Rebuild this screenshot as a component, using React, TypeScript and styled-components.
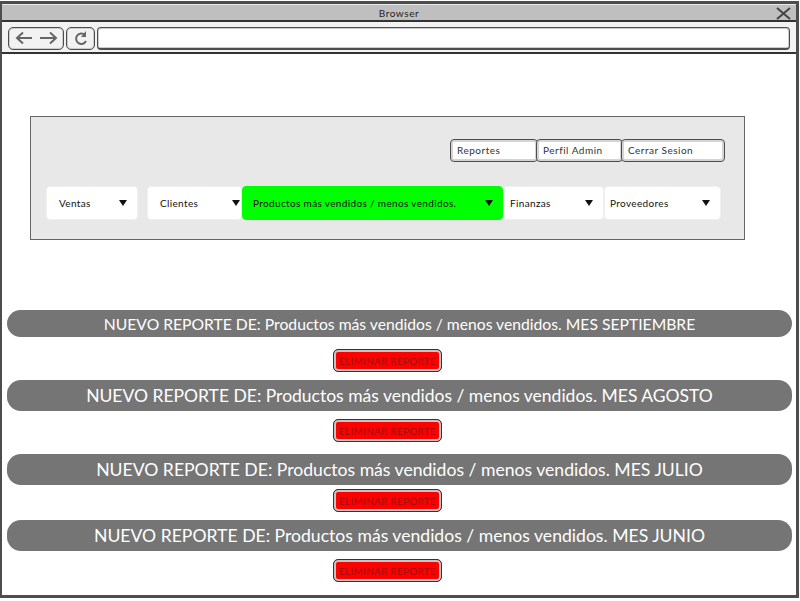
import { createGlobalStyle, styled } from 'styled-components';

const GlobalStyle = createGlobalStyle`
  html, body {
    margin: 0;
    padding: 0;
    background: #fff;
  }
  * {
    box-sizing: border-box;
  }
  body {
    font-family: 'Comic Sans MS', 'Lato', 'Noto Sans', sans-serif;
  }
`;

const Frame = styled.div`
  width: 799px;
  height: 597px;
  margin-top: 1px;
  border: 2px solid #4d4d4d;
  border-width: 3px 3px 3px 2px;
  display: flex;
  flex-direction: column;
`;

const TitleBar = styled.header`
  height: 18px;
  background: #bfbfbf;
  border-top: 1px solid #e8e8e8;
  border-bottom: 2px solid #333;
  display: flex;
  align-items: center;
  justify-content: center;
  position: relative;
  font-size: 10px;
  letter-spacing: 0.6px;
  color: #222;
`;

const CloseIcon = styled.svg`
  position: absolute;
  right: 5px;
  top: 2px;
  width: 15px;
  height: 13px;
`;

const Toolbar = styled.nav`
  height: 32px;
  background: #f2f2f2;
  border-bottom: 2px solid #333;
  display: flex;
  align-items: center;
  gap: 2px;
  padding: 2px 6px 0 6px;
`;

const ToolButton = styled.div<{ $w: number }>`
  width: ${(p) => p.$w}px;
  height: 23px;
  border: 1px solid #4d4d4d;
  border-radius: 5px;
  background: #f2f2f2;
  box-shadow: inset 0 0 0 1px #ccc;
  display: flex;
  align-items: center;
  justify-content: center;
`;

const AddressBar = styled.div`
  flex: 1;
  height: 23px;
  border: 1px solid #4d4d4d;
  border-bottom-width: 2px;
  border-radius: 4px;
  background: #fff;
  box-shadow: inset 0 0 0 1px #ccc;
`;

const Content = styled.main`
  flex: 1;
  display: flex;
  flex-direction: column;
  padding-top: 62px;
`;

const Panel = styled.section`
  width: 715px;
  height: 124px;
  margin-left: 28px;
  background: #e8e8e8;
  border: 1px solid #666;
  display: flex;
  flex-direction: column;
`;

const Tabs = styled.div`
  display: flex;
  margin: 22px 0 0 419px;
`;

const Tab = styled.div<{ $w: number }>`
  width: ${(p) => p.$w}px;
  height: 23px;
  margin-right: -2px;
  padding: 0 0 2px 6px;
  background: #fff;
  border: 1px solid #4d4d4d;
  border-radius: 4px;
  box-shadow: inset 0 0 0 2px #d4d4d4;
  display: flex;
  align-items: center;
  font-size: 10px;
  letter-spacing: 0.5px;
  color: #333;
`;

const Menu = styled.div`
  display: flex;
  margin: 24px 0 0 15px;
`;

const Dropdown = styled.div<{ $w: number; $active?: boolean; $gap?: number; $pad?: number; $end?: number }>`
  width: ${(p) => p.$w}px;
  height: 34px;
  margin-right: ${(p) => p.$gap ?? 0}px;
  padding: 0 ${(p) => p.$end ?? 10}px 0 ${(p) => p.$pad ?? 12}px;
  background: ${(p) => (p.$active ? '#00ff00' : '#fff')};
  border-radius: 4px;
  border: 1px solid ${(p) => (p.$active ? '#00ff00' : '#f0f0f0')};
  display: flex;
  align-items: center;
  justify-content: space-between;
  font-size: 10px;
  letter-spacing: 0.35px;
  color: #111;
`;

const Caret = styled.span`
  width: 0;
  height: 0;
  border-left: 4.5px solid transparent;
  border-right: 4.5px solid transparent;
  border-top: 6px solid #111;
`;

const Reports = styled.div`
  display: flex;
  flex-direction: column;
  margin-top: 70px;
`;

const ReportBar = styled.div<{ $h: number; $size: number; $top: number }>`
  height: ${(p) => p.$h}px;
  width: 785px;
  margin: ${(p) => p.$top}px 0 0 5px;
  background: #757575;
  border-radius: 14px;
  display: flex;
  align-items: center;
  justify-content: center;
  font-size: ${(p) => p.$size}px;
  color: #fff;
  white-space: nowrap;
`;

const DeleteButton = styled.div<{ $top: number }>`
  width: 109px;
  height: 23px;
  margin: ${(p) => p.$top}px 0 0 331px;
  background: #ff0000;
  border: 1px solid #333;
  border-radius: 5px;
  box-shadow: inset 0 0 0 2px #c4c4c4;
  display: flex;
  align-items: center;
  justify-content: center;
  font-size: 10px;
  letter-spacing: 0.25px;
  color: #a01010;
`;

const reports = [
  { mes: 'SEPTIEMBRE', h: 27, size: 15.7, top: 0, gap: 12 },
  { mes: 'AGOSTO', h: 31, size: 17.5, top: 8, gap: 8 },
  { mes: 'JULIO', h: 31, size: 17.6, top: 12, gap: 4 },
  { mes: 'JUNIO', h: 31, size: 17.6, top: 8, gap: 8 },
];

function App() {
  return (
    <>
      <GlobalStyle />
      <Frame>
        <TitleBar>
          Browser
          <CloseIcon viewBox="0 0 15 13">
            <path d="M1 1 L14 12 M14 1 L1 12" stroke="#444" strokeWidth="2" fill="none" />
          </CloseIcon>
        </TitleBar>
        <Toolbar>
          <ToolButton $w={56}>
            <svg width="46" height="14" viewBox="0 0 46 14">
              <path
                d="M4 7 H19 M10 1.5 L4 7 L10 12.5 M27 7 H43 M37 1.5 L43 7 L37 12.5"
                stroke="#666"
                strokeWidth="2"
                fill="none"
              />
            </svg>
          </ToolButton>
          <ToolButton $w={29}>
            <svg width="14" height="15" viewBox="0 0 14 15">
              <path d="M11 4 A5.2 5.2 0 1 0 12 10" stroke="#666" strokeWidth="2" fill="none" />
              <path d="M12 0 V6 H7 Z" fill="#666" />
            </svg>
          </ToolButton>
          <AddressBar />
        </Toolbar>
        <Content>
          <Panel>
            <Tabs>
              <Tab $w={88}>Reportes</Tab>
              <Tab $w={87}>Perfil Admin</Tab>
              <Tab $w={104}>Cerrar Sesion</Tab>
            </Tabs>
            <Menu>
              <Dropdown $w={92} $gap={9}>
                Ventas
                <Caret />
              </Dropdown>
              <Dropdown $w={95} $end={1}>
                Clientes
                <Caret />
              </Dropdown>
              <Dropdown $w={261} $active $pad={10} $end={9}>
                Productos más vendidos / menos vendidos.
                <Caret />
              </Dropdown>
              <Dropdown $w={101} $pad={6}>
                Finanzas
                <Caret />
              </Dropdown>
              <Dropdown $w={117} $pad={5}>
                Proveedores
                <Caret />
              </Dropdown>
            </Menu>
          </Panel>
          <Reports>
            {reports.map((r) => (
              <div key={r.mes}>
                <ReportBar $h={r.h} $size={r.size} $top={r.top}>
                  NUEVO REPORTE DE: Productos más vendidos / menos vendidos. MES {r.mes}
                </ReportBar>
                <DeleteButton $top={r.gap}>ELIMINAR REPORTE</DeleteButton>
              </div>
            ))}
          </Reports>
        </Content>
      </Frame>
    </>
  );
}

export default App;
